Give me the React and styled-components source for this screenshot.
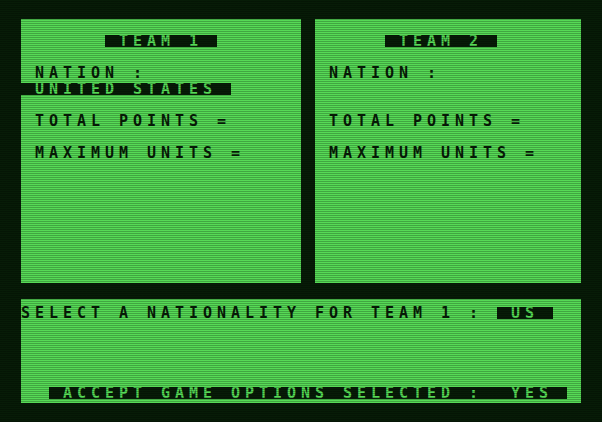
import React from "react";
import styled, { createGlobalStyle } from "styled-components";

const GREEN = "#56da56";
const DARK = "#071c07";
const CELL = 14;
const FONT = 15;

const GlobalStyle = createGlobalStyle`
  html, body {
    margin: 0;
    padding: 0;
    background: ${DARK};
  }
`;

const Page = styled.div`
  position: relative;
  width: 602px;
  height: 422px;
  box-sizing: border-box;
  padding: 19px 21px;
  background: ${DARK};
  overflow: hidden;

  &::after {
    content: "";
    position: absolute;
    inset: 0;
    pointer-events: none;
    background: repeating-linear-gradient(
      to bottom,
      rgba(0, 0, 0, 0) 0px,
      rgba(0, 0, 0, 0) 1px,
      rgba(0, 0, 0, 0.24) 1px,
      rgba(0, 0, 0, 0.24) 2px
    );
  }
`;

const Screen = styled.div`
  display: flex;
  flex-direction: column;
  gap: 16px;
  width: 560px;
`;

const TopRow = styled.div`
  display: flex;
  gap: ${CELL}px;
`;

const Panel = styled.div`
  width: ${(p) => p.$cols * CELL}px;
  height: ${(p) => p.$height}px;
  box-sizing: border-box;
  padding-top: ${(p) => p.$padTop || 0}px;
  background: ${GREEN};
  overflow: hidden;
`;

const Line = styled.div`
  height: 16px;
  padding-left: ${(p) => (p.$col || 0) * CELL}px;
  white-space: pre;
`;

const Text = styled.span`
  display: inline-block;
  vertical-align: top;
  height: 12px;
  line-height: 12px;
  font-family: "DejaVu Sans Mono", "Liberation Mono", monospace;
  font-weight: bold;
  font-size: ${FONT}px;
  letter-spacing: ${CELL - FONT * 0.602}px;
  color: ${(p) => (p.$inverse ? GREEN : DARK)};
  background: ${(p) => (p.$inverse ? DARK : "transparent")};
`;

const TeamPanel = ({ cols, team, nation, titleCol }) => (
  <Panel $cols={cols} $height={264}>
    <Line />
    <Line $col={titleCol}>
      <Text $inverse>{` TEAM ${team} `}</Text>
    </Line>
    <Line />
    <Line $col={1}>
      <Text>NATION :</Text>
    </Line>
    <Line>{nation && <Text $inverse>{` ${nation} `}</Text>}</Line>
    <Line />
    <Line $col={1}>
      <Text>TOTAL POINTS =</Text>
    </Line>
    <Line />
    <Line $col={1}>
      <Text>MAXIMUM UNITS =</Text>
    </Line>
  </Panel>
);

export default function App() {
  return (
    <>
      <GlobalStyle />
      <Page>
        <Screen>
          <TopRow>
            <TeamPanel cols={20} team={1} titleCol={6} nation="UNITED STATES" />
            <TeamPanel cols={19} team={2} titleCol={5} />
          </TopRow>
          <Panel $cols={40} $height={104} $padTop={8}>
            <Line>
              <Text>SELECT A NATIONALITY FOR TEAM 1 : </Text>
              <Text $inverse> US </Text>
            </Line>
            <Line />
            <Line />
            <Line />
            <Line />
            <Line $col={2}>
              <Text $inverse> ACCEPT GAME OPTIONS SELECTED :  YES </Text>
            </Line>
          </Panel>
        </Screen>
      </Page>
    </>
  );
}
